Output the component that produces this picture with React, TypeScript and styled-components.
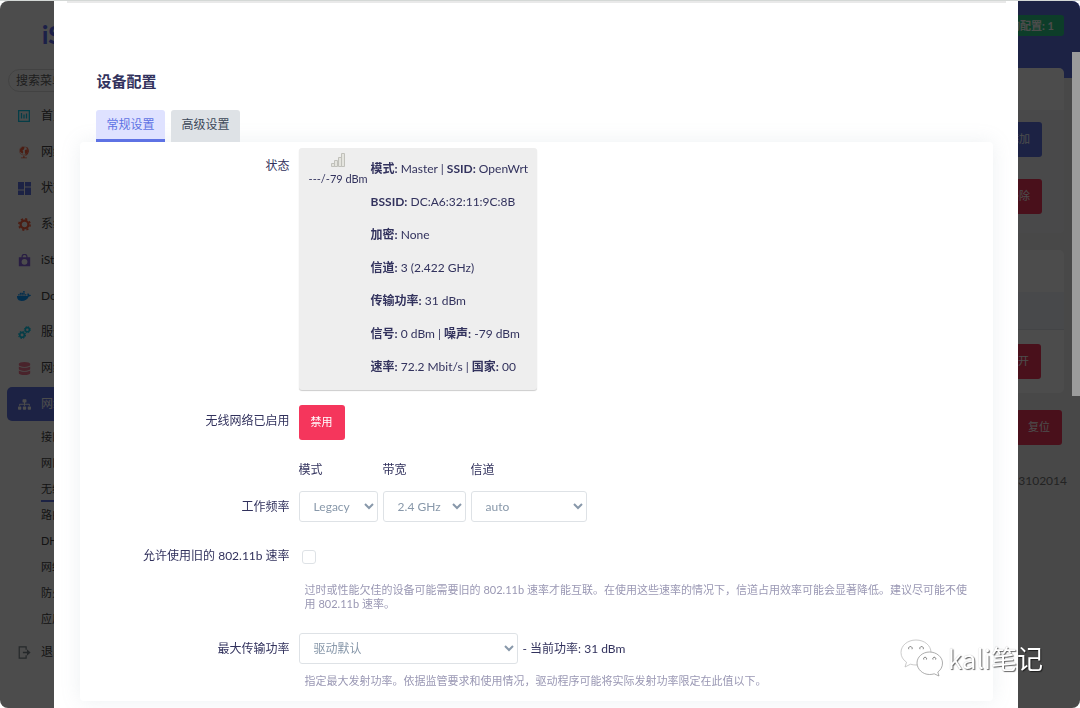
import React, { useState } from "react";
import styled, { createGlobalStyle, css } from "styled-components";
import { FaDocker, FaDatabase, FaSitemap } from "react-icons/fa";

const GlobalStyle = createGlobalStyle`
  *, *::before, *::after { box-sizing: border-box; }
  html { background: #ffffff linear-gradient(#d4d8d6 1px, #ffffff 1px) no-repeat; }
  body {
    margin: 0;
    padding-top: 1px;
    font-family: Lato, "Noto Sans CJK SC", sans-serif;
    font-size: 12px;
    line-height: 18px;
    color: #32325d;
  }
  button, select, input { font-family: inherit; font-size: inherit; }
`;

const Shell = styled.div`
  display: flex;
  height: calc(100vh - 1px);
  border-radius: 8px;
  overflow: hidden;
  background: #f1f1f1;
`;

const Sidebar = styled.aside`
  flex: 0 0 170px;
  overflow: hidden;
  padding: 20px 7px 0;
  background: #ffffff;
  color: #525f7f;
`;

const Logo = styled.a`
  display: block;
  padding-left: 35px;
  font-size: 24px;
  font-weight: 900;
  line-height: 28px;
  color: #5e6cf0;
  text-decoration: none;
`;

const Search = styled.input`
  width: 150px;
  height: 23px;
  margin: 20px 0 7px 1px;
  padding: 0 7px;
  border: 1px solid #dddddd;
  border-radius: 12px;
  background: transparent;
  &::placeholder { color: #666666; opacity: 1; }
`;

const Menu = styled.ul`
  list-style: none;
  margin: 0;
  padding: 0;
`;

const MenuLink = styled.a<{ $active?: boolean }>`
  display: flex;
  align-items: center;
  gap: 10px;
  height: 34px;
  margin-bottom: 2px;
  padding: 0 10px;
  border-radius: 5px;
  white-space: nowrap;
  text-decoration: none;
  color: ${(p) => (p.$active ? "#ffffff" : "#444444")};
  background: ${(p) => (p.$active ? "#5e72e4" : "transparent")};
`;

const MenuIcon = styled.span<{ $color: string }>`
  display: flex;
  justify-content: center;
  width: 14px;
  color: ${(p) => p.$color};
`;

const SubMenu = styled(Menu)`
  padding: 1px 0 3px 34px;
  font-size: 11px;
`;

const SubLink = styled.a<{ $active?: boolean }>`
  display: inline-block;
  height: 26px;
  line-height: 26px;
  vertical-align: top;
  text-decoration: none;
  color: #444444;
  ${(p) =>
    p.$active &&
    css`
      border-bottom: 2px solid #5e72e4;
    `}
`;

const Main = styled.main`
  flex: 1;
  display: flex;
  flex-direction: column;
  align-items: stretch;
  padding: 14px 16px 0;
  background: linear-gradient(#5e72e4 77px, #f1f1f1 77px);
`;

const Badge = styled.span`
  align-self: flex-end;
  padding: 0 10px;
  border-radius: 3px;
  background: #2dce89;
  color: #ffffff;
  font-size: 11px;
  font-weight: 700;
  line-height: 21px;
`;

const Panel = styled.section<{ $gap: number }>`
  margin-top: ${(p) => p.$gap}px;
  border-radius: 5px;
  background: #ffffff;
  overflow: hidden;
`;

const PanelHead = styled.div`
  height: 42px;
`;

const PanelBody = styled.div`
  display: flex;
  flex-direction: column;
  align-items: flex-end;
  gap: 22px;
  padding: 12px 22px 19px;
  background: #f4f5f7;
`;

const PanelStripe = styled.div`
  height: 38px;
  background: #f0f3fa;
  border-bottom: 1px solid #dfe3ea;
`;

const PanelFoot = styled.div`
  display: flex;
  justify-content: flex-end;
  padding: 14px 23px;
`;

const Button = styled.button<{ $tone: "primary" | "danger" }>`
  height: 35px;
  padding: 0 12px 3px;
  border: 0;
  border-radius: 3px;
  font-size: 11px;
  color: #ffffff;
  background: ${(p) => (p.$tone === "primary" ? "#5e72e4" : "#f5365c")};
`;

const PageActions = styled.div`
  display: flex;
  justify-content: flex-end;
  padding: 17px 2px 27px;
`;

const Version = styled.footer`
  margin-right: -3px;
  text-align: right;
  color: #777777;
`;

const Overlay = styled.div`
  position: fixed;
  inset: 1px 0 0;
  padding-right: 8px;
  border-radius: 8px;
  overflow: hidden;
  background: rgba(0, 0, 0, 0.7);
`;

const ScrollThumb = styled.div`
  position: absolute;
  top: 51px;
  right: 0;
  width: 8px;
  height: 344px;
  background: #9b9b9b;
`;

const Dialog = styled.div`
  width: 90%;
  min-height: 100%;
  margin: 0 auto;
  padding: 0 25px 7px 26px;
  background: #ffffff;
`;

const TopEdge = styled.div`
  height: 2px;
  margin: 0 -13px;
  background: #e9e9e9;
`;

const Title = styled.h2`
  margin: 67px 17px 17px;
  font-size: 15px;
  line-height: 23px;
  font-weight: 700;
`;

const Tabs = styled.div`
  display: flex;
  gap: 6px;
  padding: 0 16px;
`;

const Tab = styled.button<{ $active: boolean }>`
  height: 32px;
  padding: 0 10px 2px 11px;
  border: 0;
  border-bottom: 3px solid ${(p) => (p.$active ? "#5e72e4" : "#dee2e6")};
  border-radius: 3px 3px 0 0;
  background: ${(p) => (p.$active ? "#dfe2ff" : "#dee2e6")};
  color: ${(p) => (p.$active ? "#5e72e4" : "#3c4858")};
`;

const Card = styled.form`
  padding: 6px 19px 13px 0;
  border-radius: 4px;
  background: #ffffff;
  box-shadow: 0 0 20px rgba(136, 152, 170, 0.15);
`;

const Row = styled.div<{ $gap?: number; $end?: boolean }>`
  display: flex;
  gap: 9px;
  align-items: ${(p) => (p.$end ? "flex-end" : "flex-start")};
  margin-top: ${(p) => p.$gap ?? 0}px;
`;

const Label = styled.label<{ $height: number }>`
  flex: 0 0 210px;
  text-align: right;
  line-height: ${(p) => p.$height}px;
`;

const Field = styled.div`
  flex: 1;
  min-width: 0;
`;

const StatusBox = styled.div`
  display: inline-flex;
  gap: 3px;
  padding: 4px 9px 7px 10px;
  vertical-align: top;
  border-radius: 3px;
  background: #eeeeee;
  box-shadow: 0 1px 1px rgba(0, 0, 0, 0.2);
`;

const Signal = styled.div`
  display: flex;
  flex-direction: column;
  align-items: center;
  gap: 2px;
  font-size: 11px;
`;

const Facts = styled.div`
  line-height: 33px;
`;

const Bands = styled.div`
  display: flex;
  gap: 5px;
`;

const Band = styled.div`
  display: flex;
  flex-direction: column;
  gap: 12px;
`;

const Select = styled.select<{ $width: number }>`
  width: ${(p) => p.$width}px;
  height: 31px;
  padding: 0 0 0 10px;
  border: 1px solid #dee2e6;
  border-radius: 3px;
  background: #ffffff;
  color: #8898aa;
`;

const Checkbox = styled.input`
  appearance: none;
  display: block;
  width: 14px;
  height: 14px;
  margin: 4px 3px;
  border: 1px solid #dee2e6;
  border-radius: 3px;
  background: #ffffff;
  &:checked { background: #5e72e4; }
`;

const Inline = styled.div`
  display: flex;
  align-items: center;
  gap: 5px;
`;

const Help = styled.p<{ $gap: number }>`
  margin: ${(p) => p.$gap}px 0 0 6px;
  font-size: 11px;
  line-height: 14px;
  color: #9a98b4;
`;

const Watermark = styled.div`
  position: fixed;
  right: 37px;
  bottom: 31px;
  display: flex;
  align-items: center;
  gap: 4px;
  font-family: "Noto Sans CJK SC", sans-serif;
  font-size: 26px;
  line-height: 36px;
  color: #ffffff;
  text-shadow: 1px 1px 1px rgba(0, 0, 0, 0.6), 0 0 1px rgba(0, 0, 0, 0.3);
`;

const ChartBox = () => (
  <svg width="12" height="12" viewBox="0 0 12 12" fill="none" stroke="currentColor" strokeWidth="1.300">
    <path d="M.65.65h10.700v10.700H.65zM3.500 3v5.500M6 4.500v4M8.500 3.500v5" />
  </svg>
);

const Tiles = () => (
  <svg width="13" height="13" viewBox="0 0 13 13" fill="currentColor">
    <path d="M0 0h6v7.500H0zM7 0h6v4.500H7zM0 8.500h6V13H0zM7 5.500h6V13H7z" />
  </svg>
);

const Gear = () => (
  <svg width="13" height="13" viewBox="0 0 16 16" fill="none" stroke="currentColor">
    <circle cx="8" cy="8" r="4.800" strokeWidth="2.800" />
    <circle cx="8" cy="8" r="6.900" strokeWidth="2" strokeDasharray="2.710 2.710" />
  </svg>
);

const GlobeStand = () => (
  <svg width="13" height="13" viewBox="0 0 16 16" fill="currentColor">
    <circle cx="7" cy="6" r="5" fill="none" stroke="currentColor" strokeWidth="0.600" />
    <path d="M2.500 4l3-3 2.500.5-.5 2.500-2 1.500 1 2-1 2L2.500 7zM8.500 5l3-1 .8 2.500-2.300 4-1.500-1.500z" />
    <path d="M11 .8a7 7 0 0 1-1.500 11.500L9 11.200A6 6 0 0 0 10.200 1.700zM6.500 12h1.500v2h3v1.200H3.500V14h3z" />
  </svg>
);

const StoreBag = () => (
  <svg width="13" height="13" viewBox="0 0 16 16">
    <path d="M5 5V3.500a3 3 0 0 1 6 0V5" fill="none" stroke="currentColor" strokeWidth="1.500" />
    <path
      fillRule="evenodd"
      fill="currentColor"
      d="M1 4h14v11H1zM8 6a3.600 3.600 0 1 0 0 7.200A3.600 3.600 0 0 0 8 6z"
    />
  </svg>
);

const TwoGears = () => (
  <svg width="13" height="13" viewBox="0 0 16 16" fill="none" stroke="currentColor">
    <circle cx="5" cy="11" r="2.800" strokeWidth="2" />
    <circle cx="5" cy="11" r="4.200" strokeWidth="1.400" strokeDasharray="1.900 1.400" />
    <circle cx="11.500" cy="4.500" r="2.500" strokeWidth="1.900" />
    <circle cx="11.500" cy="4.500" r="3.800" strokeWidth="1.200" strokeDasharray="1.700 1.300" />
  </svg>
);

const Exit = () => (
  <svg width="13" height="13" viewBox="0 0 16 16">
    <path d="M10 4.500V1H1.500v14H10v-3.500" fill="none" stroke="currentColor" strokeWidth="1.500" />
    <path d="M6 7h5V4l4.500 4-4.500 4V9H6z" fill="currentColor" />
  </svg>
);

const SignalBars = () => (
  <svg width="16" height="16" viewBox="0 0 16 16" fill="#e4e4de" stroke="#c0c0ba">
    <path d="M1.500 11.500h3v3h-3zM4.500 8.500h3v6h-3zM8.500 5.500h3v9h-3zM11.500 1.500h3v13h-3z" />
  </svg>
);

const WeChat = () => (
  <svg width="44" height="38" viewBox="0 0 44 38" fill="#ffffff" stroke="#8a8a8a" strokeWidth="0.700">
    <path
      stroke="#b4b4b4"
      d="M16 1C7.500 1 1 6.500 1 13.500c0 4 2 7.300 5.500 9.700L5 28l5.500-2.800c1.800.6 3.600.8 5.500.8 8.500 0 15-5.500 15-12.500S24.500 1 16 1z"
    />
    <path d="M29.500 13C22.500 13 17 18 17 24s5.500 11.500 12.500 11.500c1.700 0 3.200-.2 4.700-.7L39 37l-1.200-4c3-2 4.700-5.200 4.700-9 0-6-6-11-13-11z" />
    <g fill="none" stroke="#777777" strokeWidth="1">
      <path d="M8.800 10.200a1.800 1.800 0 1 1 3.200 0M20 10.200a1.800 1.800 0 1 1 3.200 0" />
      <path d="M23.800 20.500a1.500 1.500 0 1 1 2.600 0M33 20.500a1.500 1.500 0 1 1 2.600 0" />
    </g>
  </svg>
);

const menu = [
  { label: "首页", color: "#11cdef", icon: <ChartBox /> },
  { label: "网络向导", color: "#fb6340", icon: <GlobeStand /> },
  { label: "状态", color: "#5e72e4", icon: <Tiles /> },
  { label: "系统", color: "#fb6340", icon: <Gear /> },
  { label: "iStore", color: "#8965e0", icon: <StoreBag /> },
  { label: "Docker", color: "#0d99ff", icon: <FaDocker size={14} /> },
  { label: "服务", color: "#11cdef", icon: <TwoGears /> },
  { label: "网络存储", color: "#f3768f", icon: <FaDatabase size={13} /> },
];

const subMenu = ["接口", "网口", "无线", "路由", "DHCP", "网络", "防火墙", "应用"];

const facts: [string, string][][] = [
  [["模式:", "Master"], ["SSID:", "OpenWrt"]],
  [["BSSID:", "DC:A6:32:11:9C:8B"]],
  [["加密:", "None"]],
  [["信道:", "3 (2.422 GHz)"]],
  [["传输功率:", "31 dBm"]],
  [["信号:", "0 dBm"], ["噪声:", "-79 dBm"]],
  [["速率:", "72.2 Mbit/s"], ["国家:", "00"]],
];

export default function App() {
  const [tab, setTab] = useState("常规设置");
  return (
    <>
      <GlobalStyle />
      <Shell>
        <Sidebar>
          <Logo href="#">iStoreOS</Logo>
          <Search placeholder="搜索菜单" aria-label="搜索菜单" />
          <Menu>
            {menu.map((m) => (
              <li key={m.label}>
                <MenuLink href="#">
                  <MenuIcon $color={m.color}>{m.icon}</MenuIcon>
                  {m.label}
                </MenuLink>
              </li>
            ))}
            <li>
              <MenuLink href="#" $active>
                <MenuIcon $color="#ffffff"><FaSitemap size={13} /></MenuIcon>
                网络
              </MenuLink>
              <SubMenu>
                {subMenu.map((s) => (
                  <li key={s}>
                    <SubLink href="#" $active={s === "无线"}>{s}</SubLink>
                  </li>
                ))}
              </SubMenu>
            </li>
            <li>
              <MenuLink href="#">
                <MenuIcon $color="#7c858c"><Exit /></MenuIcon>
                退出
              </MenuLink>
            </li>
          </Menu>
        </Sidebar>
        <Main>
          <Badge>未保存的配置: 1</Badge>
          <Panel $gap={32}>
            <PanelHead />
            <PanelBody>
              <Button $tone="primary">添加</Button>
              <Button $tone="danger">移除</Button>
            </PanelBody>
          </Panel>
          <Panel $gap={17}>
            <PanelHead />
            <PanelStripe />
            <PanelFoot>
              <Button $tone="danger">打开</Button>
            </PanelFoot>
          </Panel>
          <PageActions>
            <Button $tone="danger">复位</Button>
          </PageActions>
          <Version>2023102014</Version>
        </Main>
      </Shell>
      <Overlay>
        <Dialog role="dialog" aria-labelledby="dialog-title">
          <TopEdge />
          <Title id="dialog-title">设备配置</Title>
          <Tabs>
            {["常规设置", "高级设置"].map((t) => (
              <Tab key={t} type="button" $active={t === tab} onClick={() => setTab(t)}>
                {t}
              </Tab>
            ))}
          </Tabs>
          <Card>
            <Row>
              <Label as="span" $height={36}>状态</Label>
              <Field>
                <StatusBox>
                  <Signal>
                    <SignalBars />
                    ---/-79 dBm
                  </Signal>
                  <Facts>
                    {facts.map((line) => (
                      <div key={line[0][0]}>
                        {line.map(([k, v], i) => (
                          <React.Fragment key={k}>
                            {i > 0 && " | "}
                            <strong>{k}</strong> {v}
                          </React.Fragment>
                        ))}
                      </div>
                    ))}
                  </Facts>
                </StatusBox>
              </Field>
            </Row>
            <Row $gap={15}>
              <Label htmlFor="toggle" $height={32}>无线网络已启用</Label>
              <Button id="toggle" type="button" $tone="danger">禁用</Button>
            </Row>
            <Row $gap={21} $end>
              <Label as="span" $height={31}>工作频率</Label>
              <Bands>
                <Band>
                  <label htmlFor="mode">模式</label>
                  <Select id="mode" $width={79}><option>Legacy</option></Select>
                </Band>
                <Band>
                  <label htmlFor="width">带宽</label>
                  <Select id="width" $width={83}><option>2.4 GHz</option></Select>
                </Band>
                <Band>
                  <label htmlFor="channel">信道</label>
                  <Select id="channel" $width={116}><option>auto</option></Select>
                </Band>
              </Bands>
            </Row>
            <Row $gap={24}>
              <Label htmlFor="legacy" $height={20}>允许使用旧的 802.11b 速率</Label>
              <Field>
                <Checkbox id="legacy" type="checkbox" />
                <Help $gap={19}>
                  过时或性能欠佳的设备可能需要旧的 802.11b 速率才能互联。在使用这些速率的情况下，信道占用效率可能会显著降低。建议尽可能不使用 802.11b 速率。
                </Help>
              </Field>
            </Row>
            <Row $gap={22}>
              <Label htmlFor="power" $height={31}>最大传输功率</Label>
              <Field>
                <Inline>
                  <Select id="power" $width={219}><option>驱动默认</option></Select>
                  <span>- 当前功率: 31 dBm</span>
                </Inline>
                <Help $gap={10}>
                  指定最大发射功率。依据监管要求和使用情况，驱动程序可能将实际发射功率限定在此值以下。
                </Help>
              </Field>
            </Row>
          </Card>
        </Dialog>
        <ScrollThumb />
      </Overlay>
      <Watermark>
        <WeChat />
        kali笔记
      </Watermark>
    </>
  );
}
